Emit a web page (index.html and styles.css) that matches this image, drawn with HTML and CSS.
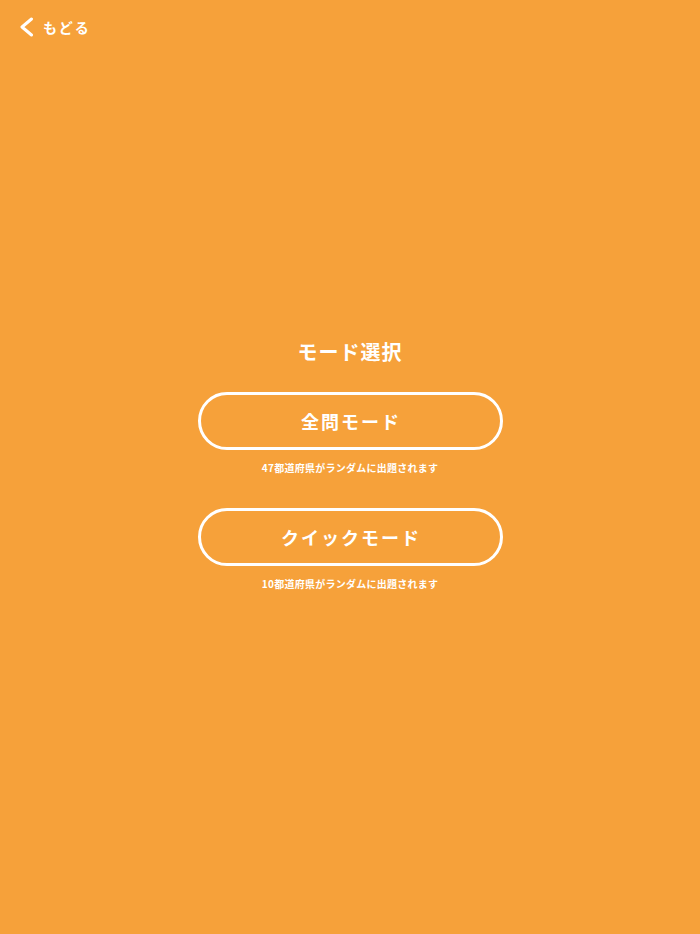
FILE: index.html
```html
<!DOCTYPE html>
<html lang="ja">
<head>
<meta charset="utf-8">
<title>モード選択</title>
<link rel="stylesheet" href="styles.css">
</head>
<body>
<div class="page">
  <header class="topbar">
    <a class="back" href="#">
      <svg class="back-icon" width="16" height="20" viewBox="0 0 16 20" aria-hidden="true">
        <path d="M13.5 2 L4 10 L13.5 18" fill="none" stroke="#fff" stroke-width="3" stroke-linecap="round" stroke-linejoin="round"/>
      </svg>
      <span class="back-label">もどる</span>
    </a>
  </header>
  <main class="content">
    <h1 class="title">モード選択</h1>
    <div class="mode">
      <button class="mode-btn">全問モード</button>
      <p class="mode-note">47都道府県がランダムに出題されます</p>
    </div>
    <div class="mode">
      <button class="mode-btn">クイックモード</button>
      <p class="mode-note">10都道府県がランダムに出題されます</p>
    </div>
  </main>
</div>
</body>
</html>
```

FILE: styles.css
```css
html, body {
  margin: 0;
  padding: 0;
}
body {
  background: #f6a13a;
  font-family: "Noto Sans CJK JP", "Noto Sans", sans-serif;
  color: #fff;
}
.page {
  min-height: 934px;
  display: flex;
  flex-direction: column;
}
.topbar {
  padding: 17px 0 0 18px;
  height: 21px;
}
.back {
  display: inline-flex;
  align-items: center;
  gap: 9px;
  color: #fff;
  text-decoration: none;
}
.back-icon {
  display: block;
}
.back-label {
  font-size: 14px;
  font-weight: 700;
  letter-spacing: 2px;
  line-height: 20px;
}
.content {
  display: flex;
  flex-direction: column;
  align-items: center;
  padding-top: 300px;
}
.title {
  margin: 0;
  font-size: 20px;
  font-weight: 700;
  line-height: 28px;
  letter-spacing: 1px;
}
.mode {
  display: flex;
  flex-direction: column;
  align-items: center;
  margin-top: 26px;
}
.mode + .mode {
  margin-top: 33px;
}
.mode-btn {
  box-sizing: border-box;
  width: 305px;
  height: 58px;
  border: 3px solid #fff;
  border-radius: 29px;
  background: transparent;
  color: #fff;
  font-family: inherit;
  font-size: 18px;
  font-weight: 700;
  letter-spacing: 2px;
  padding: 0 0 0 2px;
  cursor: pointer;
}
.mode-note {
  margin: 11px 0 0;
  font-size: 10px;
  font-weight: 700;
  line-height: 14px;
  letter-spacing: 0.25px;
}
```
